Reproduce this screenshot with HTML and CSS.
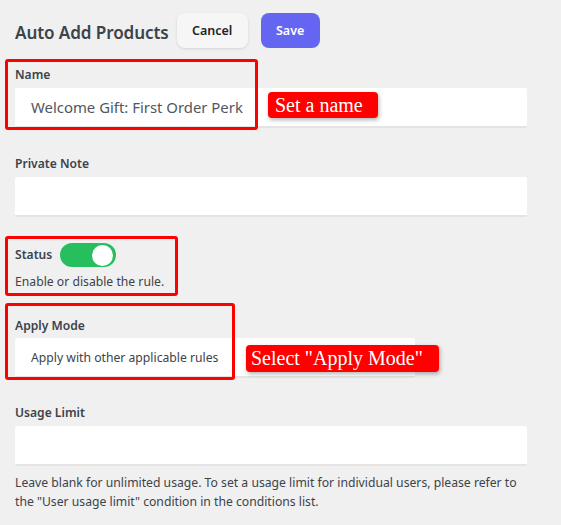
FILE: index.html
```html
<!DOCTYPE html>
<html lang="en">
<head>
<meta charset="utf-8">
<title>Auto Add Products</title>
<link rel="stylesheet" href="styles.css">
</head>
<body>
<div class="page">
  <header class="header">
    <h1 class="title">Auto Add Products</h1>
    <button class="btn btn-cancel">Cancel</button>
    <button class="btn btn-save">Save</button>
  </header>

  <div class="field field-name">
    <label class="label">Name</label>
    <div class="input"><span class="value value-lg">Welcome Gift: First Order Perk</span></div>
    <div class="mark mark-name"></div>
    <div class="tag tag-name">Set a name</div>
  </div>

  <div class="field field-note">
    <label class="label">Private Note</label>
    <div class="input"></div>
  </div>

  <div class="field field-status">
    <div class="status-row">
      <label class="label label-inline">Status</label>
      <span class="toggle"><span class="knob"></span></span>
    </div>
    <p class="help">Enable or disable the rule.</p>
    <div class="mark mark-status"></div>
  </div>

  <div class="field field-apply">
    <label class="label label-tight">Apply Mode</label>
    <div class="input input-select"><span class="value">Apply with other applicable rules</span></div>
    <div class="mark mark-apply"></div>
    <div class="tag tag-apply">Select "Apply Mode"</div>
  </div>

  <div class="field field-usage">
    <label class="label">Usage Limit</label>
    <div class="input"></div>
    <p class="help help-long">Leave blank for unlimited usage. To set a usage limit for individual users, please refer to the "User usage limit" condition in the conditions list.</p>
  </div>
</div>
</body>
</html>
```

FILE: styles.css
```css
* { box-sizing: border-box; }
html, body { margin: 0; padding: 0; }
body {
  background: #f0f0f0;
  font-family: "Noto Sans", "Open Sans", sans-serif;
  color: #3c434a;
  width: 561px;
  height: 525px;
  overflow: hidden;
}
.page {
  padding: 13px 34px 0 15px;
  display: flex;
  flex-direction: column;
}
.header {
  display: flex;
  align-items: center;
  gap: 8px;
  height: 35px;
}
.title {
  margin: 0;
  padding-top: 3px;
  font-size: 17.1px;
  font-weight: 600;
  color: #3c434a;
  letter-spacing: -0.1px;
}
.btn {
  height: 35px;
  border: none;
  border-radius: 8px;
  font-family: inherit;
  font-size: 12.5px;
  font-weight: 600;
  padding: 0;
}
.btn-cancel {
  width: 71px;
  background: #f6f6f6;
  color: #1d2327;
  box-shadow: 0 1px 3px rgba(0,0,0,0.12);
}
.btn-save {
  width: 59px;
  margin-left: 5px;
  background: #6466f1;
  color: #fff;
}
.field {
  position: relative;
  display: flex;
  flex-direction: column;
}
.field-name { margin-top: 17px; }
.field-note { margin-top: 26px; }
.field-status { margin-top: 26px; }
.field-apply { margin-top: 25px; }
.field-usage { margin-top: 25px; }
.label {
  display: block;
  font-size: 12.1px;
  font-weight: 600;
  line-height: 20px;
  margin-bottom: 3px;
  color: #3c434a;
}
.label-inline { margin: 0; }
.label-tight { margin-bottom: 2px; }
.input {
  height: 40px;
  background: #fff;
  border-bottom: 2px solid #e4e4e4;
  border-radius: 2px;
  display: flex;
  align-items: center;
  padding-left: 16px;
}
.input-select { width: 400px; }
.value {
  font-size: 12.2px;
  color: #3c434a;
}
.value-lg {
  font-size: 14.9px;
  color: #50575e;
}
.status-row {
  display: flex;
  align-items: center;
  gap: 8px;
  height: 24px;
}
.toggle {
  width: 56px;
  height: 24px;
  border-radius: 12px;
  background: #27be5e;
  display: flex;
  align-items: center;
  justify-content: flex-end;
  padding-right: 3px;
}
.knob {
  width: 21px;
  height: 21px;
  border-radius: 50%;
  background: #fff;
}
.help {
  margin: 6px 0 0;
  font-size: 12.2px;
  line-height: 18px;
  color: #3c434a;
}
.help-long {
  margin-top: 7px;
  line-height: 19px;
}
.mark {
  position: absolute;
  border: 3px solid #f00;
  border-radius: 3px;
  pointer-events: none;
}
.mark-name { left: -10px; top: -6px; width: 253px; height: 71px; }
.mark-status { left: -10px; top: -7px; width: 173px; height: 60px; }
.mark-apply { left: -10px; top: -13px; width: 230px; height: 77px; }
.tag {
  position: absolute;
  background: #f00;
  color: #fff;
  font-family: "Liberation Serif", "Times New Roman", serif;
  font-size: 20px;
  line-height: 26px;
  border-radius: 4px;
  padding: 0 7px;
  box-shadow: 1px 2px 4px rgba(0,0,0,0.3);
  white-space: nowrap;
}
.tag-name { left: 253px; top: 27px; width: 110px; }
.tag-apply { left: 231px; top: 29px; width: 193px; height: 27px; padding-left: 5px; }
```
